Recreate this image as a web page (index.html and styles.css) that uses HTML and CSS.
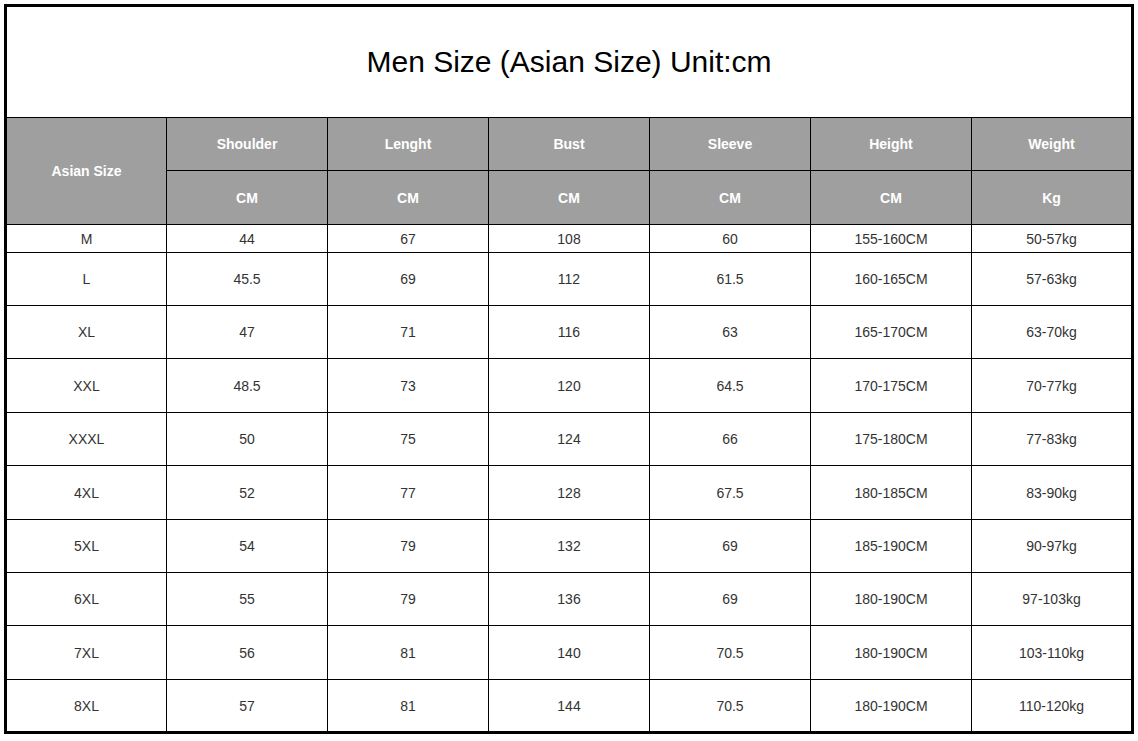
FILE: index.html
```html
<!DOCTYPE html>
<html>
<head>
<meta charset="utf-8">
<link rel="stylesheet" href="styles.css">
</head>
<body>
<div class="page">
<table class="size-table">
  <colgroup>
    <col class="c"><col class="c"><col class="c"><col class="c"><col class="c"><col class="c"><col class="c">
  </colgroup>
  <tr class="title-row"><td colspan="7" class="title">Men Size (Asian Size) Unit:cm</td></tr>
  <tr class="head-row h1">
    <th rowspan="2">Asian Size</th>
    <th>Shoulder</th><th>Lenght</th><th>Bust</th><th>Sleeve</th><th>Height</th><th>Weight</th>
  </tr>
  <tr class="head-row h2">
    <th>CM</th><th>CM</th><th>CM</th><th>CM</th><th>CM</th><th>Kg</th>
  </tr>
  <tr class="r-first"><td>M</td><td>44</td><td>67</td><td>108</td><td>60</td><td>155-160CM</td><td>50-57kg</td></tr>
  <tr class="r53"><td>L</td><td>45.5</td><td>69</td><td>112</td><td>61.5</td><td>160-165CM</td><td>57-63kg</td></tr>
  <tr class="r53"><td>XL</td><td>47</td><td>71</td><td>116</td><td>63</td><td>165-170CM</td><td>63-70kg</td></tr>
  <tr class="r54"><td>XXL</td><td>48.5</td><td>73</td><td>120</td><td>64.5</td><td>170-175CM</td><td>70-77kg</td></tr>
  <tr class="r53"><td>XXXL</td><td>50</td><td>75</td><td>124</td><td>66</td><td>175-180CM</td><td>77-83kg</td></tr>
  <tr class="r54"><td>4XL</td><td>52</td><td>77</td><td>128</td><td>67.5</td><td>180-185CM</td><td>83-90kg</td></tr>
  <tr class="r53"><td>5XL</td><td>54</td><td>79</td><td>132</td><td>69</td><td>185-190CM</td><td>90-97kg</td></tr>
  <tr class="r53"><td>6XL</td><td>55</td><td>79</td><td>136</td><td>69</td><td>180-190CM</td><td>97-103kg</td></tr>
  <tr class="r54"><td>7XL</td><td>56</td><td>81</td><td>140</td><td>70.5</td><td>180-190CM</td><td>103-110kg</td></tr>
  <tr class="r53"><td>8XL</td><td>57</td><td>81</td><td>144</td><td>70.5</td><td>180-190CM</td><td>110-120kg</td></tr>
</table>
</div>
</body>
</html>
```

FILE: styles.css
```css
html, body {
  margin: 0;
  padding: 0;
  background: #fff;
}
.page {
  padding: 4px 0 0 4px;
}
.size-table {
  border-collapse: collapse;
  table-layout: fixed;
  width: 1130px;
  border: 3px solid #000;
  font-family: "Liberation Sans", Arial, sans-serif;
}
.size-table col.c {
  width: 161px;
}
.size-table td, .size-table th {
  border: 1px solid #000;
  padding: 0;
  text-align: center;
  vertical-align: middle;
}
.size-table td {
  font-size: 14px;
  color: #333;
}
.title-row {
  height: 112px;
}
.size-table td.title {
  font-size: 30px;
  color: #000;
  padding-bottom: 1px;
}
.head-row th {
  background: #9f9f9f;
  color: #fff;
  font-size: 14px;
  font-weight: bold;
}
.h1 { height: 53px; }
.h2 { height: 54px; }
.r-first { height: 28px; }
.r53 { height: 53px; }
.r54 { height: 54px; }
```
